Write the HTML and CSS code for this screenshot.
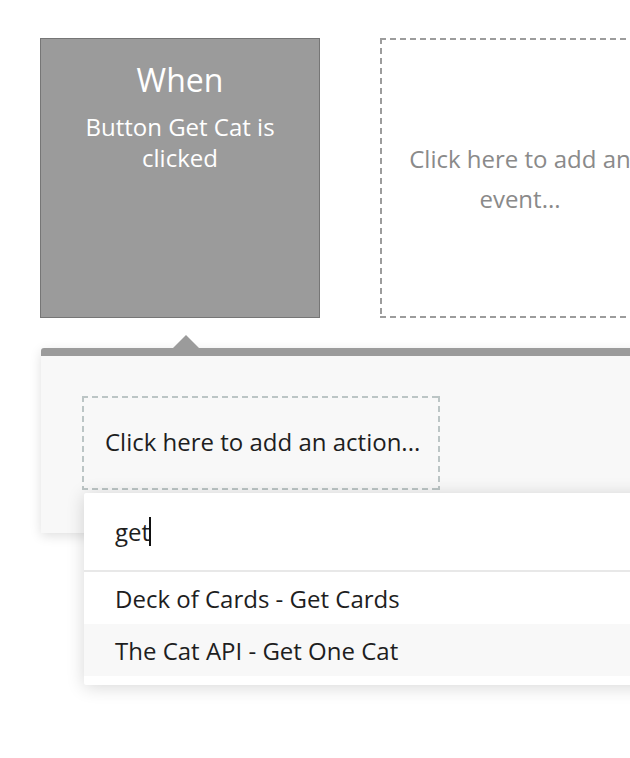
FILE: index.html
```html
<!DOCTYPE html>
<html>
<head>
<meta charset="utf-8">
<link rel="stylesheet" href="styles.css">
</head>
<body>
<div class="canvas">
  <div class="events">
    <div class="card card-when">
      <div class="card-title">When</div>
      <div class="card-desc">Button Get Cat is clicked</div>
    </div>
    <div class="card card-empty">
      <div class="card-placeholder">Click here to add an event...</div>
    </div>
  </div>
  <div class="panel">
    <div class="action-slot">Click here to add an action...</div>
    <div class="dropdown">
      <div class="search"><span class="search-text">get</span><span class="caret"></span></div>
      <div class="option">Deck of Cards - Get Cards</div>
      <div class="option option-hover">The Cat API - Get One Cat</div>
    </div>
  </div>
</div>
</body>
</html>
```
FILE: styles.css
```css
html, body {
  margin: 0;
  padding: 0;
  background: #ffffff;
}
.canvas {
  width: 630px;
  height: 758px;
  overflow: hidden;
  position: relative;
  font-family: "Open Sans", "Liberation Sans", sans-serif;
}
.events {
  display: flex;
  gap: 60px;
  padding: 38px 0 0 40px;
}
.card {
  box-sizing: border-box;
  width: 280px;
  height: 280px;
  flex: none;
}
.card-when {
  background: #9b9b9b;
  border: 1px solid #767676;
  color: #ffffff;
  text-align: center;
  padding: 21px 20px 0;
}
.card-title {
  font-size: 32px;
  line-height: 40px;
}
.card-desc {
  font-size: 24px;
  line-height: 31px;
  margin-top: 11px;
}
.card-empty {
  --dash: #9c9c9c;
  background-image:
    repeating-linear-gradient(90deg, var(--dash) 0 6px, transparent 6px 10px),
    repeating-linear-gradient(90deg, var(--dash) 0 6px, transparent 6px 10px),
    repeating-linear-gradient(180deg, var(--dash) 0 6px, transparent 6px 10px),
    repeating-linear-gradient(180deg, var(--dash) 0 6px, transparent 6px 10px);
  background-size: 100% 2px, 100% 2px, 2px 100%, 2px 100%;
  background-position: left top, left bottom, left top, right top;
  background-repeat: no-repeat;
  display: flex;
  align-items: center;
  justify-content: center;
  text-align: center;
}
.card-placeholder {
  color: #8a8a8a;
  font-size: 24px;
  line-height: 40px;
  width: 240px;
  padding-top: 2px;
}
.panel {
  position: relative;
  margin: 30px 0 0 41px;
  width: 700px;
  height: 137px;
  background: #f8f8f8;
  border-top: 8px solid #9b9b9b;
  border-top-left-radius: 3px;
  box-shadow: 0 3px 12px rgba(0, 0, 0, 0.13);
  padding-top: 40px;
  box-sizing: content-box;
}
.panel::before {
  content: "";
  position: absolute;
  left: 132px;
  top: -21px;
  border-left: 13px solid transparent;
  border-right: 13px solid transparent;
  border-bottom: 13px solid #9b9b9b;
}
.action-slot {
  --dash: #bcc5c5;
  box-sizing: border-box;
  margin-left: 41px;
  width: 358px;
  height: 94px;
  background-image:
    repeating-linear-gradient(90deg, var(--dash) 0 6px, transparent 6px 10px),
    repeating-linear-gradient(90deg, var(--dash) 0 6px, transparent 6px 10px),
    repeating-linear-gradient(180deg, var(--dash) 0 6px, transparent 6px 10px),
    repeating-linear-gradient(180deg, var(--dash) 0 6px, transparent 6px 10px);
  background-size: 100% 2px, 100% 2px, 2px 100%, 2px 100%;
  background-position: left top, left bottom, left top, right top;
  background-repeat: no-repeat;
  padding-left: 23px;
  padding-top: 29px;
  font-size: 24px;
  line-height: 34px;
  color: #1e1e1e;
}
.dropdown {
  position: absolute;
  left: 43px;
  top: 137px;
  width: 700px;
  background: #ffffff;
  box-shadow: 0 2px 18px rgba(0, 0, 0, 0.16);
  border-radius: 2px;
  padding-bottom: 9px;
  color: #1e1e1e;
  font-size: 24px;
}
.search {
  height: 77px;
  display: flex;
  align-items: center;
  padding-left: 31px;
  border-bottom: 2px solid #e8e8e8;
}
.search-text {
  line-height: 30px;
}
.caret {
  display: inline-block;
  width: 2px;
  height: 29px;
  background: #111111;
  margin-left: -1px;
}
.option {
  height: 52px;
  display: flex;
  align-items: center;
  padding-left: 31px;
}
.option-hover {
  background: #f8f8f8;
}
```
